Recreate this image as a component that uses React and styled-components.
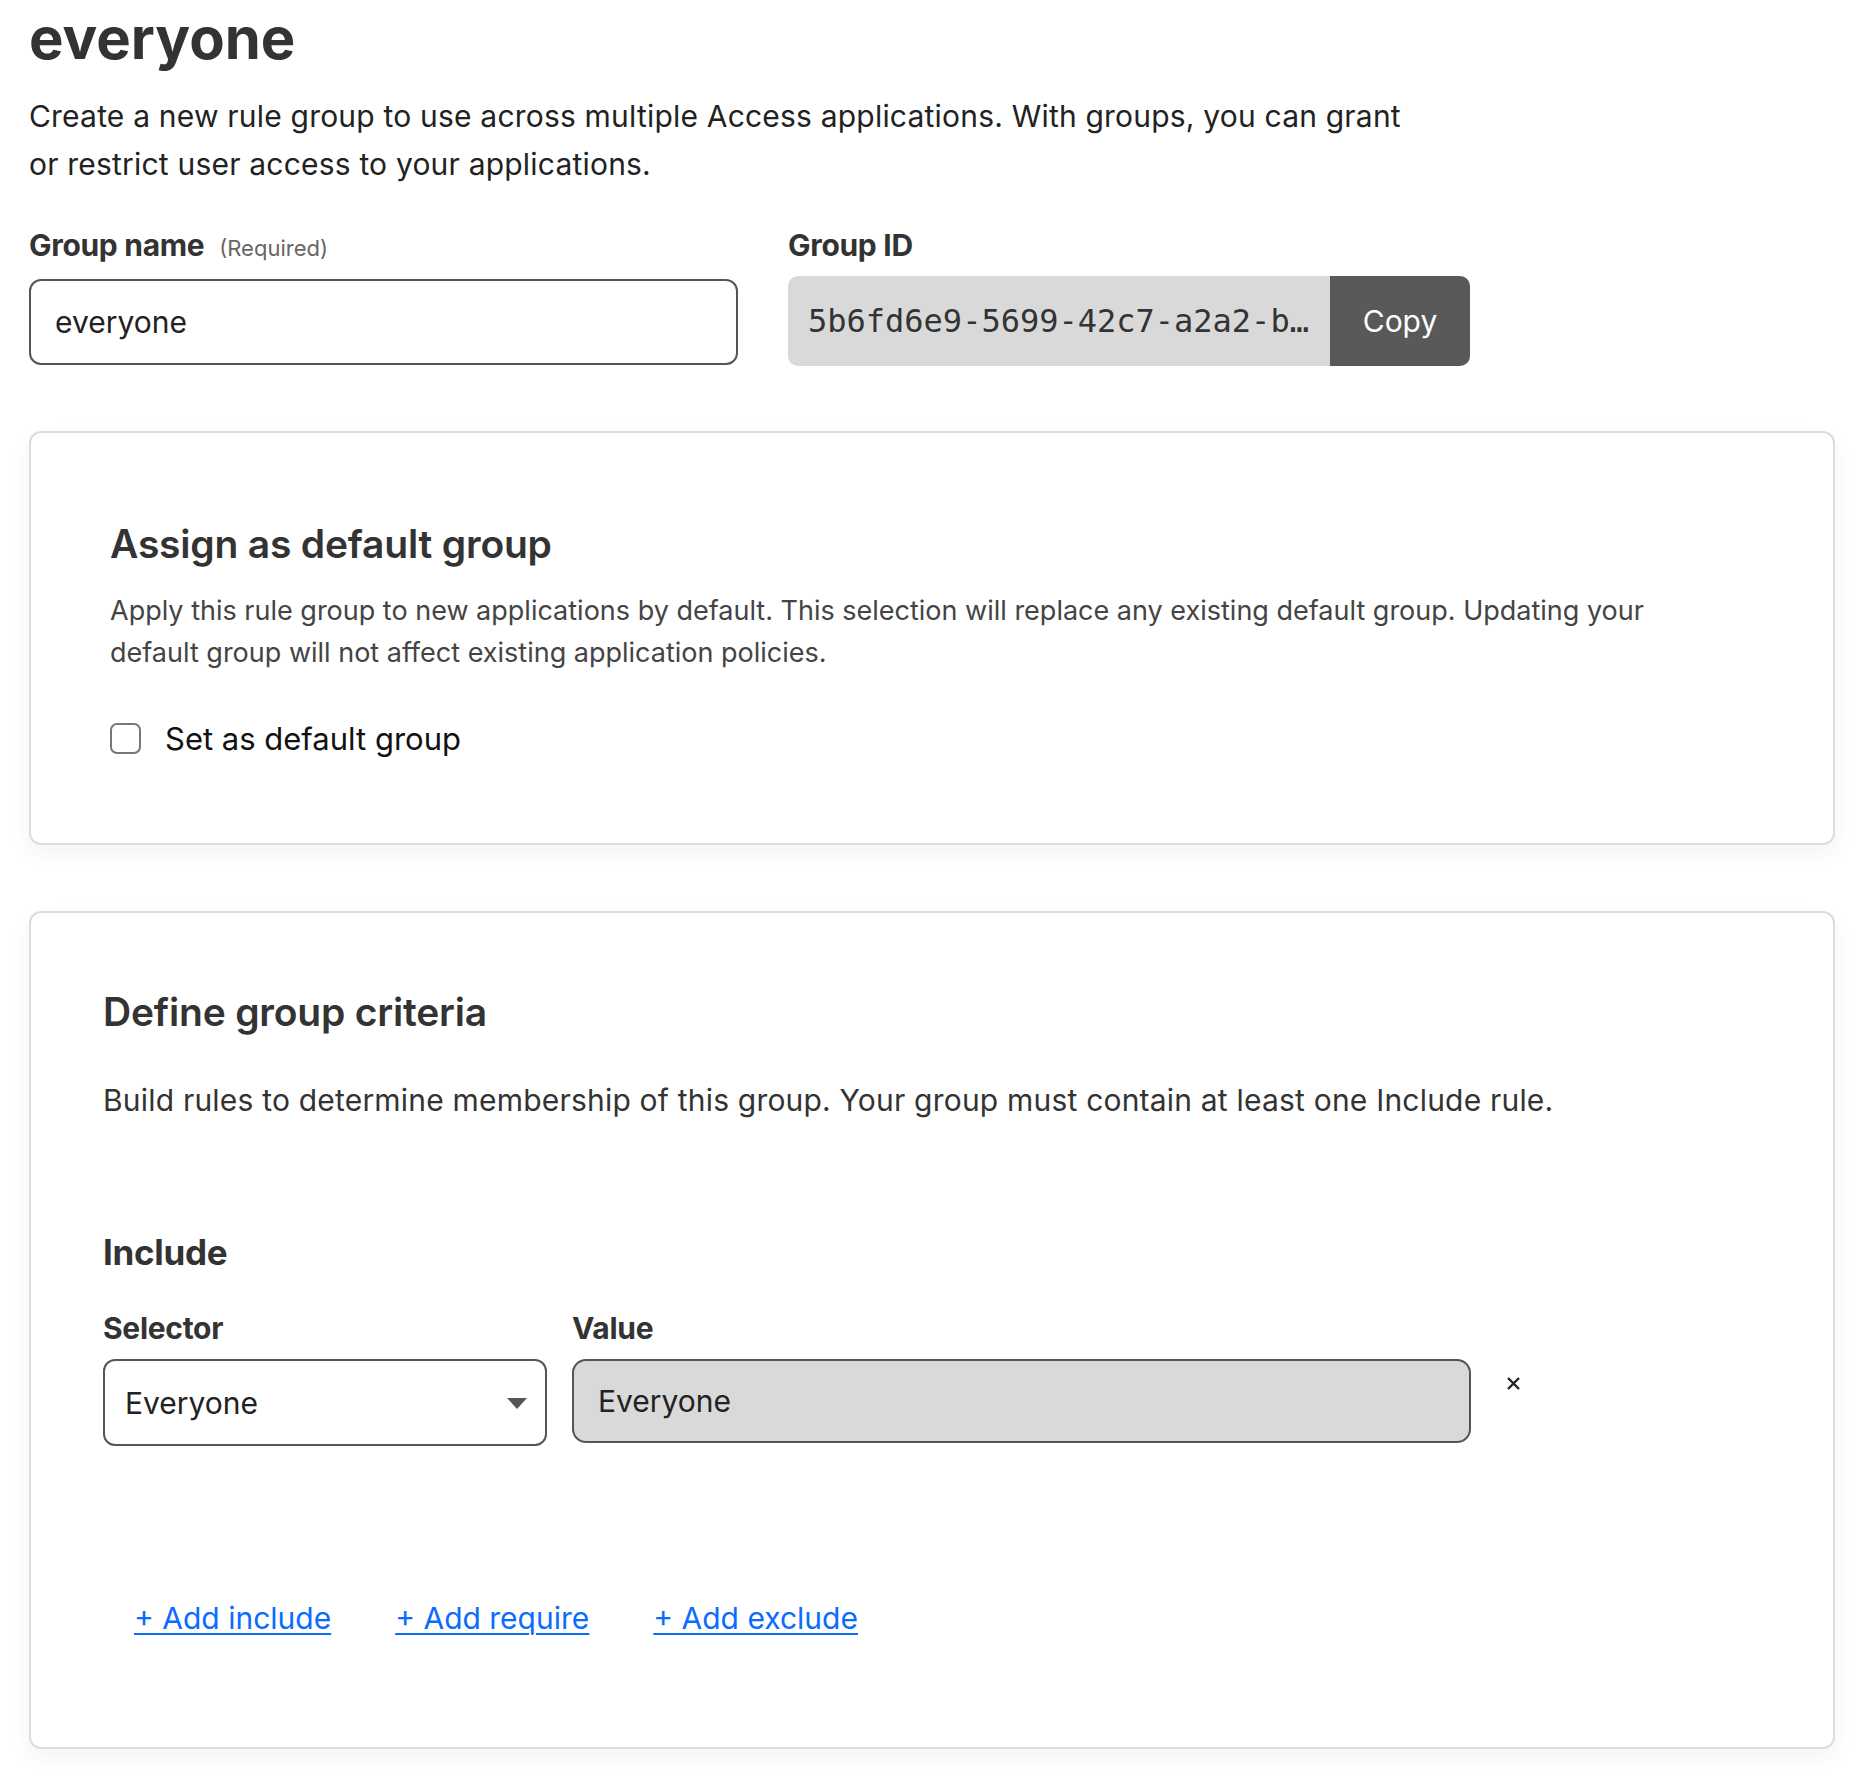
import React, { useState } from "react";
import styled, { createGlobalStyle } from "styled-components";

const GlobalStyle = createGlobalStyle`
  body {
    margin: 0;
    background: #fff;
    font-family: Inter, "Noto Sans", sans-serif;
    color: #333;
  }
`;

function App() {
  const [isDefault, setIsDefault] = useState(false);
  const groupId = "5b6fd6e9-5699-42c7-a2a2-b3c1e0f48d27";

  return (
    <Page>
      <GlobalStyle />
      <Title>everyone</Title>
      <Intro>
        Create a new rule group to use across multiple Access applications. With groups, you can grant
        or restrict user access to your applications.
      </Intro>

      <FieldRow>
        <Field width="709px">
          <Label>
            Group name <Hint>(Required)</Hint>
          </Label>
          <TextInput defaultValue="everyone" />
        </Field>
        <Field width="682px">
          <Label>Group ID</Label>
          <IdBox>
            <IdText>{groupId}</IdText>
            <CopyButton>Copy</CopyButton>
          </IdBox>
        </Field>
      </FieldRow>

      <Card pad="101px 79px 0" height="414px">
        <CardTitle offset="-12px">Assign as default group</CardTitle>
        <CardText>
          Apply this rule group to new applications by default. This selection will replace any existing default group. Updating your
          default group will not affect existing application policies.
        </CardText>
        <CheckRow>
          <Checkbox
            type="checkbox"
            checked={isDefault}
            onChange={(e) => setIsDefault(e.target.checked)}
          />
          Set as default group
        </CheckRow>
      </Card>

      <Card pad="86px 72px 0" height="838px" gapTop="66px">
        <CardTitle offset="-9px">Define group criteria</CardTitle>
        <CriteriaText>
          Build rules to determine membership of this group. Your group must contain at least one Include rule.
        </CriteriaText>
        <SectionTitle>Include</SectionTitle>
        <RuleRow>
          <Field width="444px">
            <SmallLabel>Selector</SmallLabel>
            <SelectBox>
              Everyone
              <Arrow />
            </SelectBox>
          </Field>
          <Field width="899px">
            <SmallLabel>Value</SmallLabel>
            <ValueBox>Everyone</ValueBox>
          </Field>
          <RemoveButton aria-label="Remove">
            <svg width="15" height="15" viewBox="0 0 15 15">
              <path d="M2 2 L13 13 M13 2 L2 13" stroke="#222" strokeWidth="2.4" fill="none" />
            </svg>
          </RemoveButton>
        </RuleRow>
        <LinkRow>
          <AddLink href="#">+ Add include</AddLink>
          <AddLink href="#">+ Add require</AddLink>
          <AddLink href="#">+ Add exclude</AddLink>
        </LinkRow>
      </Card>
      <Spacer />
    </Page>
  );
}

const Page = styled.div`
  width: 1806px;
  margin-left: 29px;
  display: flex;
  flex-direction: column;
`;

const Title = styled.h1`
  margin: 6px 0 0;
  font-size: 58px;
  line-height: 64px;
  font-weight: 700;
  color: #333;
`;

const Intro = styled.p`
  margin: 22px 0 0;
  max-width: 1400px;
  font-size: 30px;
  line-height: 48px;
  letter-spacing: 0.2px;
  color: #222;
`;

const FieldRow = styled.div`
  display: flex;
  gap: 50px;
  margin-top: 40px;
`;

const Field = styled.div`
  display: flex;
  flex-direction: column;
  width: ${(p) => p.width};
`;

const Label = styled.label`
  font-size: 30px;
  line-height: 34px;
  font-weight: 700;
  color: #333;
  letter-spacing: -0.3px;
  margin-bottom: 14px;
`;

const Hint = styled.span`
  font-size: 22px;
  font-weight: 400;
  color: #666;
  margin-left: 8px;
  letter-spacing: 0;
`;

const TextInput = styled.input`
  box-sizing: border-box;
  height: 86px;
  width: 100%;
  border: 2px solid #555;
  border-radius: 12px;
  padding: 0 24px;
  font-family: inherit;
  font-size: 30px;
  color: #222;
  outline: none;
`;

const IdBox = styled.div`
  display: flex;
  height: 90px;
  border-radius: 10px;
  overflow: hidden;
  background: #d9d9d9;
`;

const IdText = styled.div`
  flex: 1;
  min-width: 0;
  padding: 0 20px;
  font-family: "DejaVu Sans Mono", "Liberation Mono", monospace;
  font-size: 32px;
  line-height: 90px;
  color: #333;
  white-space: nowrap;
  overflow: hidden;
  text-overflow: ellipsis;
`;

const CopyButton = styled.button`
  width: 140px;
  flex-shrink: 0;
  border: 0;
  background: #595959;
  color: #fff;
  font-family: inherit;
  font-size: 30px;
  cursor: pointer;
`;

const Card = styled.section`
  box-sizing: border-box;
  margin-top: ${(p) => p.gapTop || "65px"};
  height: ${(p) => p.height};
  padding: ${(p) => p.pad};
  border: 2px solid #dcdcdc;
  border-radius: 12px;
  background: #fff;
  box-shadow: 0 8px 22px rgba(0, 0, 0, 0.05);
  display: flex;
  flex-direction: column;
`;

const CardTitle = styled.h2`
  margin: ${(p) => p.offset} 0 0;
  font-size: 39px;
  line-height: 44px;
  font-weight: 600;
  color: #333;
  letter-spacing: -0.2px;
`;

const CardText = styled.p`
  margin: 24px 0 0;
  max-width: 1590px;
  font-size: 27px;
  line-height: 42px;
  color: #444;
`;

const CheckRow = styled.label`
  display: flex;
  align-items: center;
  gap: 24px;
  height: 36px;
  margin-top: 46px;
  font-size: 31px;
  color: #111;
`;

const Checkbox = styled.input`
  appearance: none;
  margin: 0;
  width: 31px;
  height: 31px;
  border: 2px solid #777;
  border-radius: 7px;
  background: #fff;
`;

const CriteriaText = styled.p`
  margin: 46px 0 0;
  font-size: 30px;
  line-height: 40px;
  letter-spacing: 0.2px;
  color: #333;
`;

const SectionTitle = styled.h3`
  margin: 110px 0 0;
  font-size: 35px;
  line-height: 44px;
  font-weight: 700;
  color: #333;
  letter-spacing: -0.3px;
`;

const RuleRow = styled.div`
  display: flex;
  align-items: flex-start;
  gap: 25px;
  margin-top: 37px;
`;

const SmallLabel = styled.div`
  font-size: 30px;
  line-height: 34px;
  font-weight: 700;
  color: #333;
  letter-spacing: -0.3px;
  margin-bottom: 14px;
`;

const SelectBox = styled.div`
  box-sizing: border-box;
  position: relative;
  height: 87px;
  border: 2px solid #555;
  border-radius: 12px;
  padding: 0 20px;
  display: flex;
  align-items: center;
  font-size: 30px;
  color: #222;
`;

const Arrow = styled.span`
  position: absolute;
  right: 18px;
  top: 37px;
  width: 0;
  height: 0;
  border-left: 10px solid transparent;
  border-right: 10px solid transparent;
  border-top: 11px solid #555;
`;

const ValueBox = styled.div`
  box-sizing: border-box;
  height: 84px;
  border: 2px solid #555;
  border-radius: 14px;
  background: #d9d9d9;
  padding: 0 24px;
  display: flex;
  align-items: center;
  font-size: 30px;
  color: #222;
`;

const RemoveButton = styled.button`
  margin: 65px 0 0 10px;
  padding: 0;
  border: 0;
  background: none;
  width: 15px;
  height: 15px;
  display: flex;
  cursor: pointer;
`;

const LinkRow = styled.div`
  display: flex;
  gap: 64px;
  margin: 152px 0 0 31px;
`;

const AddLink = styled.a`
  font-size: 30px;
  line-height: 40px;
  color: #0a6cff;
  text-decoration: underline;
  text-decoration-thickness: 2px;
  text-underline-offset: 4px;
`;

const Spacer = styled.div`
  height: 23px;
`;

export default App;
